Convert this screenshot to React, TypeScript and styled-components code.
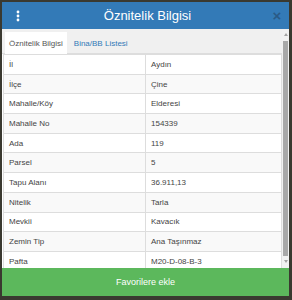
import React from "react"
import styled, { createGlobalStyle } from "styled-components"

const GlobalStyle = createGlobalStyle`
  html, body {
    margin: 0;
    padding: 0;
    background: #35352c;
  }
  body {
    font-family: "Liberation Sans", Arial, sans-serif;
  }
`

const Page = styled.div`
  width: 292px;
  height: 300px;
  padding: 2px 3px 4px 2px;
  box-sizing: border-box;
  background: #3a3930;
`

const Modal = styled.div`
  display: flex;
  flex-direction: column;
  height: 100%;
  background: #fff;
`

const Header = styled.div`
  height: 27px;
  flex: none;
  background: #337ab7;
  display: flex;
  align-items: center;
  padding: 0 6px 0 14px;
  color: #fff;
`

const HeaderTitle = styled.div`
  flex: 1;
  text-align: center;
  font-size: 13px;
  padding-left: 4px;
`

const CloseButton = styled.span`
  font-size: 15px;
  font-weight: bold;
  color: #2a5a87;
  line-height: 1;
  width: 12px;
  text-align: center;
`

const Body = styled.div`
  flex: 1;
  display: flex;
  min-height: 0;
`

const Content = styled.div`
  flex: 1;
  overflow: hidden;
`

const TabBar = styled.div`
  height: 25px;
  background: #f0f0f0;
  display: flex;
  align-items: flex-end;
  padding-left: 3px;
  border-bottom: 1px solid #ddd;
  box-sizing: border-box;
`

const Tab = styled.div<{ $active?: boolean }>`
  height: 22px;
  padding: 0 4px;
  display: flex;
  align-items: center;
  font-size: 8px;
  color: ${(p) => (p.$active ? "#555" : "#337ab7")};
  background: ${(p) => (p.$active ? "#fff" : "transparent")};
  margin-right: ${(p) => (p.$active ? "3px" : "0")};
  margin-bottom: -1px;
`

const Table = styled.table`
  width: calc(100% - 1px);
  margin-left: 1px;
  border-collapse: collapse;
  table-layout: fixed;
  font-size: 8px;
  color: #444;
`

const Row = styled.tr<{ $striped: boolean }>`
  background: ${(p) => (p.$striped ? "#f9f9f9" : "#fff")};
`

const Cell = styled.td<{ $w: string }>`
  height: 18.7px;
  padding: 0 5px;
  border: 1px solid #ddd;
  width: ${(p) => p.$w};
  vertical-align: middle;
`

const ScrollTrack = styled.div`
  width: 7px;
  flex: none;
  background: #f1f1f1;
  display: flex;
  flex-direction: column;
  align-items: center;
  padding: 3px 0 4px;
  box-sizing: border-box;
`

const Arrow = styled.div<{ $down?: boolean }>`
  width: 0;
  height: 0;
  border-left: 2.5px solid transparent;
  border-right: 2.5px solid transparent;
  ${(p) =>
    p.$down
      ? "border-top: 3px solid #a3a3a3;"
      : "border-bottom: 3px solid #a3a3a3;"}
  margin: 1px 0;
`

const Thumb = styled.div`
  flex: 1;
  width: 5px;
  background: #a8a8a8;
  margin: 4px 0 3px;
`

const FavButton = styled.div`
  height: 28px;
  flex: none;
  background: #5cb85c;
  color: #fff;
  font-size: 9px;
  display: flex;
  align-items: center;
  justify-content: center;
`

const rows: [string, string][] = [
  ["İl", "Aydın"],
  ["İlçe", "Çine"],
  ["Mahalle/Köy", "Elderesi"],
  ["Mahalle No", "154339"],
  ["Ada", "119"],
  ["Parsel", "5"],
  ["Tapu Alanı", "36.911,13"],
  ["Nitelik", "Tarla"],
  ["Mevkii", "Kavacık"],
  ["Zemin Tip", "Ana Taşınmaz"],
  ["Pafta", "M20-D-08-B-3"],
]

function MenuDots() {
  return (
    <svg width="4" height="12" viewBox="0 0 4 12">
      <circle cx="2" cy="2" r="1.4" fill="#fff" />
      <circle cx="2" cy="6" r="1.4" fill="#fff" />
      <circle cx="2" cy="10" r="1.4" fill="#fff" />
    </svg>
  )
}

export default function App() {
  return (
    <Page>
      <GlobalStyle />
      <Modal>
        <Header>
          <MenuDots />
          <HeaderTitle>Öznitelik Bilgisi</HeaderTitle>
          <CloseButton>×</CloseButton>
        </Header>
        <Body>
          <Content>
            <TabBar>
              <Tab $active>Öznitelik Bilgisi</Tab>
              <Tab>Bina/BB Listesi</Tab>
            </TabBar>
            <Table>
              <tbody>
                {rows.map(([k, v], i) => (
                  <Row key={k} $striped={i % 2 === 1}>
                    <Cell $w="131px">{k}</Cell>
                    <Cell $w="auto">{v}</Cell>
                  </Row>
                ))}
              </tbody>
            </Table>
          </Content>
          <ScrollTrack>
            <Arrow />
            <Thumb />
            <Arrow $down />
          </ScrollTrack>
        </Body>
        <FavButton>Favorilere ekle</FavButton>
      </Modal>
    </Page>
  )
}
